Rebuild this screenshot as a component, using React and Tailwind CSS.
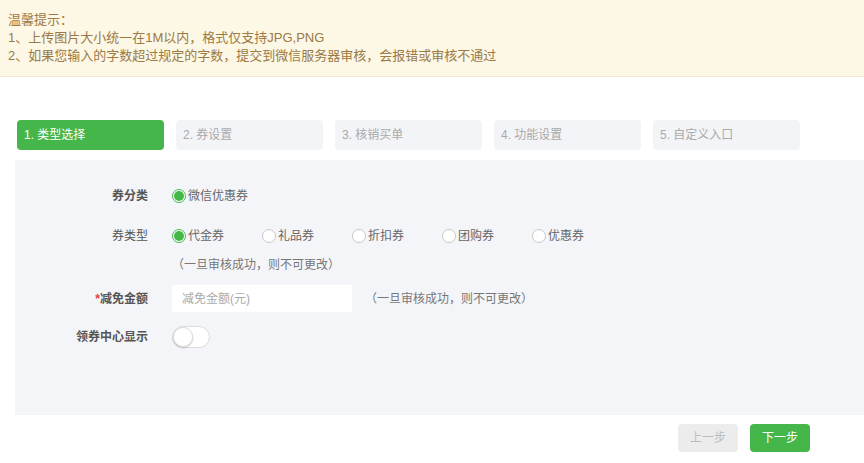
import React from "react";

const font = { fontFamily: '"Liberation Sans", "Noto Sans CJK SC", sans-serif' };

function Radio({ checked, label }) {
  return (
    <div className="flex items-center gap-[2px]">
      <span
        className={
          "w-[14px] h-[14px] rounded-full border flex items-center justify-center bg-white " +
          (checked ? "border-[#45b649]" : "border-[#c8c8c8]")
        }
      >
        {checked && <span className="w-[10px] h-[10px] rounded-full bg-[#45b649]" />}
      </span>
      <span className="text-[12px] text-[#666]">{label}</span>
    </div>
  );
}

export default function App() {
  const steps = ["1. 类型选择", "2. 券设置", "3. 核销买单", "4. 功能设置", "5. 自定义入口"];
  return (
    <div className="w-[864px] h-[463px] bg-white overflow-hidden" style={font}>
      <div className="h-[77px] bg-[#fdf7e5] border-b border-[#f3ead0] pl-[8px] pt-[11px] text-[13px] leading-[18px] text-[#9b7a45]">
        <div>温馨提示：</div>
        <div>1、上传图片大小统一在1M以内，格式仅支持JPG,PNG</div>
        <div>2、如果您输入的字数超过规定的字数，提交到微信服务器审核，会报错或审核不通过</div>
      </div>

      <div className="flex gap-[12px] pl-[17px] mt-[43px]">
        {steps.map((s, i) => (
          <div
            key={s}
            className={
              "w-[147px] h-[30px] rounded-[4px] flex items-center pl-[7px] text-[12px] " +
              (i === 0 ? "bg-[#45b649] text-white" : "bg-[#f3f4f8] text-[#aaa]")
            }
          >
            {s}
          </div>
        ))}
      </div>

      <div className="ml-[15px] mt-[10px] h-[255px] bg-[#f4f5f9] pt-[27px]">
        <div className="flex items-center h-[18px]">
          <div className="w-[133px] text-right text-[12px] font-bold text-[#555]">券分类</div>
          <div className="ml-[24px]">
            <Radio checked label="微信优惠券" />
          </div>
        </div>

        <div className="flex items-center h-[18px] mt-[22px]">
          <div className="w-[133px] text-right text-[12px] text-[#555]">券类型</div>
          <div className="ml-[24px] flex">
            {[
              ["代金券", true],
              ["礼品券", false],
              ["折扣券", false],
              ["团购券", false],
              ["优惠券", false],
            ].map(([l, c]) => (
              <div key={l} className="w-[90px]">
                <Radio checked={c} label={l} />
              </div>
            ))}
          </div>
        </div>
        <div className="ml-[157px] mt-[12px] text-[12px] text-[#777] leading-[16px]">（一旦审核成功，则不可更改）</div>

        <div className="flex items-center mt-[12px]">
          <div className="w-[133px] text-right text-[12px] font-bold text-[#555]">
            <span className="text-[#e4393c]">*</span>减免金额
          </div>
          <div className="ml-[24px] w-[180px] h-[27px] bg-white flex items-center pl-[10px] text-[12px] text-[#aaa]">
            减免金额(元)
          </div>
          <div className="ml-[13px] text-[12px] text-[#777]">（一旦审核成功，则不可更改）</div>
        </div>

        <div className="flex items-center mt-[14px]">
          <div className="w-[133px] text-right text-[12px] font-bold text-[#555]">领券中心显示</div>
          <div className="ml-[24px] w-[38px] h-[22px] rounded-full bg-white border border-[#dcdcdc] relative">
            <span className="absolute left-0 top-0 w-[20px] h-[20px] rounded-full bg-white border border-[#dcdcdc] shadow-[0_1px_2px_rgba(0,0,0,0.2)]" />
          </div>
        </div>
      </div>

      <div className="flex justify-end gap-[12px] pr-[54px] mt-[9px]">
        <div className="w-[60px] h-[28px] rounded-[4px] bg-[#ececec] text-[#bbb] text-[12px] flex items-center justify-center">上一步</div>
        <div className="w-[60px] h-[28px] rounded-[4px] bg-[#45b649] text-white text-[12px] flex items-center justify-center">下一步</div>
      </div>
    </div>
  );
}
